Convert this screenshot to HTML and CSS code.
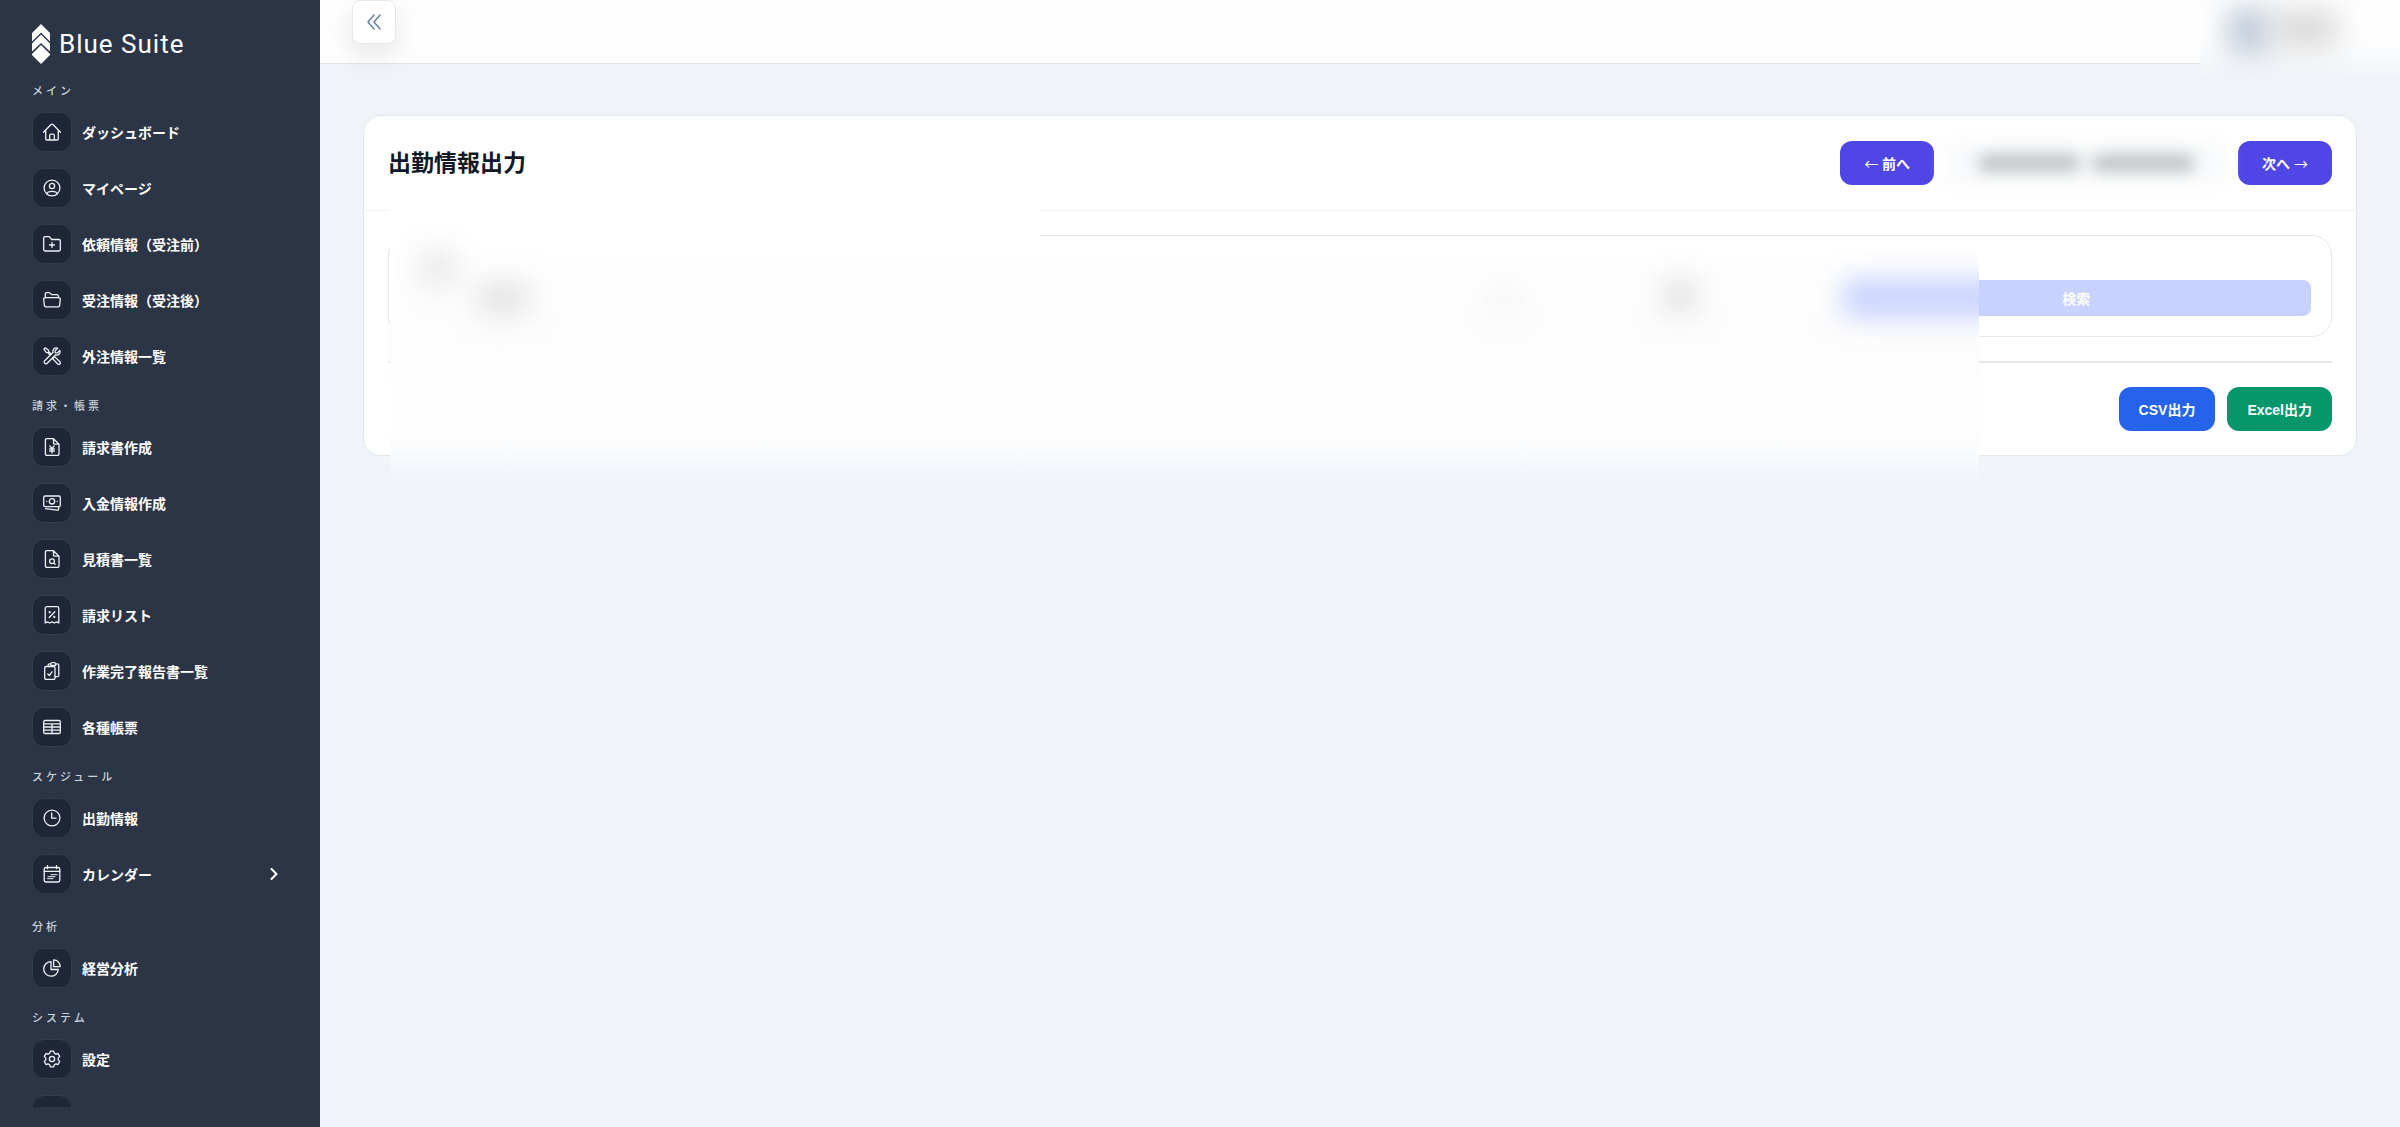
FILE: index.html
```html
<!DOCTYPE html>
<html lang="ja">
<head>
<meta charset="utf-8">
<meta name="viewport" content="width=device-width, initial-scale=1">
<title>出勤情報出力</title>
<link rel="stylesheet" href="styles.css">
</head>
<body>
<div class="app">
  <aside class="sidebar">
    <a class="logo" href="#">
      <svg class="logo-mark" viewBox="0 0 18 40" aria-hidden="true"><path d="M9 0l9 9v8.500l-9-9-9 9V9z"/><path d="M9 10.500l9 9v8l-9-8.500-9 8.500v-8z"/><path d="M9 21l9 9v1l-9 9-9-9v-1z"/></svg>
      <span>Blue Suite</span>
    </a>
    <nav class="nav">
      <h2 class="nav-heading">メイン</h2>
      <a class="nav-item" href="#"><span class="nav-icon"><svg viewBox="0 0 18 18"><path d="M.5 9.300L7.800 1.700a1.700 1.700 0 0 1 2.400 0l7.300 7.600M2.700 7.200v8.600c0 .7.500 1.200 1.200 1.200h10.200c.7 0 1.200-.5 1.200-1.200V7.200M6.700 17v-4.500c0-.8.500-1.300 1.300-1.300h2c.8 0 1.300.5 1.300 1.300V17"/></svg></span>ダッシュボード</a>
      <a class="nav-item" href="#"><span class="nav-icon"><svg viewBox="0 0 18 18"><circle cx="9" cy="9" r="7.900"/><circle cx="9" cy="7" r="2.600"/><path d="M3.700 14.800c.5-1.700 2.500-2.400 5.300-2.400s4.800.7 5.300 2.400"/></svg></span>マイページ</a>
      <a class="nav-item" href="#"><span class="nav-icon"><svg viewBox="0 0 18 18"><path d="M.7 14.600V3.100c0-.8.600-1.400 1.400-1.400h4.200l2.400 2.800h7.200c.8 0 1.400.6 1.400 1.400v8.700c0 .8-.6 1.400-1.400 1.400H2.100c-.8 0-1.400-.6-1.400-1.400zM9 7.500v5M6.500 10h5"/></svg></span>依頼情報（受注前）</a>
      <a class="nav-item" href="#"><span class="nav-icon"><svg viewBox="0 0 18 18"><path d="M2.300 6.800V2.900c0-.8.500-1.300 1.300-1.300h3l2 2h5.200c1 0 1.600.6 1.600 1.500v1.700M2.100 6.700h13.800c.9 0 1.500.6 1.400 1.500l-.7 6.300c-.1.800-.7 1.300-1.500 1.300H2.900c-.8 0-1.400-.5-1.500-1.300L.7 8.200c-.1-.9.500-1.500 1.400-1.500z"/></svg></span>受注情報（受注後）</a>
      <a class="nav-item" href="#"><span class="nav-icon"><svg viewBox="0 0 18 18"><path d="M7.200 8.300L4.900 5.600l-1.700-.3L.9 2.200 2.300.8l3.100 2.300.4 1.700 2.500 2.400M10.600 10.500l1.300-.6 5 4.900c1.300 1.500-.7 3.500-2.200 2.200l-4.700-4.900.6-1.600zM16.800 3.400l-2.500 2.500-2.100-.1-.1-2.100 2.500-2.500c-1.800-.8-3.700-.1-4.400 1.500-.4.800-.4 1.700-.1 2.500L1.700 13.800c-1.700 1.500.9 4.200 2.500 2.500l8.500-8.500c2.600 1 5.200-1.500 4.100-4.400z"/></svg></span>外注情報一覧</a>
      <h2 class="nav-heading">請求・帳票</h2>
      <a class="nav-item" href="#"><span class="nav-icon"><svg viewBox="0 0 18 18"><path d="M3.700.7h6.800L16 6.200v9.900c0 .8-.5 1.300-1.300 1.300H3.700c-.8 0-1.300-.5-1.300-1.300V2c0-.8.500-1.300 1.300-1.300zM10.500.7v4.200c0 .8.500 1.300 1.300 1.300H16M6.900 8L9 10.700 11.100 8M9 10.700v4.200M6.700 11h4.600M6.700 13h4.600"/></svg></span>請求書作成</a>
      <a class="nav-item" href="#"><span class="nav-icon"><svg viewBox="0 0 18 18"><rect x=".7" y="2" width="16.600" height="10.600" rx="1.400"/><circle cx="9" cy="7.300" r="2.700"/><path d="M3.600 7.300h.2M14.200 7.300h.2M2.500 14.700l11.600 1.500c1 .1 1.500-.3 1.500-1.200v-2"/></svg></span>入金情報作成</a>
      <a class="nav-item" href="#"><span class="nav-icon"><svg viewBox="0 0 18 18"><path d="M3.700.7h6.800L16 6.200v9.900c0 .8-.5 1.300-1.300 1.300H3.700c-.8 0-1.300-.5-1.300-1.300V2c0-.8.500-1.300 1.300-1.300zM10.500.7v4.200c0 .8.500 1.300 1.300 1.300H16M10.800 13l1.300 1.300"/><circle cx="9" cy="11.200" r="2.400"/></svg></span>見積書一覧</a>
      <a class="nav-item" href="#"><span class="nav-icon"><svg viewBox="0 0 18 18"><path d="M2.200 17V2.300C2.200 1.400 2.900.7 3.800.7h10.400c.9 0 1.600.7 1.600 1.600V17l-2.300-1.200-2.200 1.200L9 15.800 6.700 17l-2.200-1.200zM6.200 11.500l5.600-5.800"/><circle cx="6.700" cy="6.200" r=".5"/><circle cx="11.300" cy="11" r=".5"/></svg></span>請求リスト</a>
      <a class="nav-item" href="#"><span class="nav-icon"><svg viewBox="0 0 18 18"><rect x="1.700" y="4.500" width="10.300" height="13" rx="1.400"/><path d="M5.200 4.500V3.200c0-.8.500-1.300 1.300-1.300h1.200C8 .9 9 .4 10.200.4s2.200.5 2.500 1.500h1.600c.9 0 1.500.6 1.500 1.500v9.800c0 .9-.6 1.500-1.500 1.500H12M7.700 1.900v1.400h5V1.900M4.800 12l1.500 1.600 2.700-3.800"/></svg></span>作業完了報告書一覧</a>
      <a class="nav-item" href="#"><span class="nav-icon"><svg viewBox="0 0 18 18"><rect x=".7" y="2.500" width="16.600" height="13" rx="1.200"/><path d="M.7 5.800h16.600M.7 9h16.600M.7 12.200h16.600M9 5.800v9.700"/></svg></span>各種帳票</a>
      <h2 class="nav-heading">スケジュール</h2>
      <a class="nav-item" href="#"><span class="nav-icon"><svg viewBox="0 0 18 18"><circle cx="9" cy="9" r="7.900"/><path d="M8.700 4v5.200H13"/></svg></span>出勤情報</a>
      <a class="nav-item nav-item-group" href="#"><span class="nav-icon"><svg viewBox="0 0 18 18"><rect x="1.200" y="2.500" width="15.600" height="14.500" rx="1.800"/><path d="M4.500.7v3M13.500.7v3M1.200 6.300h15.600"/><path stroke-width="1" d="M8 9.700h6M5 11.700h7M4.500 13.700h5.500"/></svg></span>カレンダー<svg class="chevron" viewBox="0 0 10 12"><path d="M2.500 1l5 5-5 5"/></svg></a>
      <h2 class="nav-heading">分析</h2>
      <a class="nav-item" href="#"><span class="nav-icon"><svg viewBox="0 0 18 18"><path d="M8 2.600a7.300 7.300 0 1 0 7.300 7.900H8z"/><path d="M10.600.9v6.700h6.600A6.700 6.700 0 0 0 10.600.9z"/></svg></span>経営分析</a>
      <h2 class="nav-heading">システム</h2>
      <a class="nav-item" href="#"><span class="nav-icon"><svg viewBox="0 0 18 18"><path d="M7.300 1.100h3.400l.6 2.100 1.500.9 2.200-.6 1.700 2.900-1.500 1.700v1.800l1.500 1.700-1.700 2.900-2.200-.6-1.500.9-.6 2.100H7.300l-.6-2.100-1.500-.9-2.200.6-1.700-2.900 1.500-1.700V8.100L1.300 6.400 3 3.500l2.200.6 1.500-.9z"/><circle cx="9" cy="9" r="2.600"/></svg></span>設定</a>
      <div class="nav-item"><span class="nav-icon"></span></div>
    </nav>
  </aside>

  <div class="page">
    <header class="topbar">
      <button class="toggle" type="button" aria-label="メニュー"><svg viewBox="0 0 14 16"><path d="M7 1L1 8l6 7M13 1L7 8l6 7"/></svg></button>
      <div class="veil veil-account"><span class="blob blob-avatar"></span><span class="blob blob-name"></span></div>
    </header>

    <main class="main">
      <section class="card">
        <div class="card-head">
          <h1 class="title">出勤情報出力</h1>
          <div class="period">
            <button class="btn btn-nav" type="button"><span class="arrow">←</span> 前へ</button>
            <div class="range"><span class="range-date"></span><span class="range-date"></span></div>
            <button class="btn btn-nav" type="button">次へ <span class="arrow">→</span></button>
          </div>
        </div>
        <div class="card-body">
          <form class="filter">
            <button class="search" type="submit" disabled>検索</button>
          </form>
          <hr class="rule">
          <div class="exports">
            <button class="btn btn-csv" type="button">CSV出力</button>
            <button class="btn btn-excel" type="button">Excel出力</button>
          </div>
        </div>
        <div class="veil veil-left">
          <span class="blob blob-label"></span>
          <span class="blob blob-value"></span>
        </div>
        <div class="veil veil-right">
          <span class="blob blob-faint"></span>
          <span class="blob blob-mark"></span>
          <span class="blob blob-search"></span>
        </div>
      </section>
    </main>
  </div>
</div>
</body>
</html>
```
FILE: styles.css
```css
* { box-sizing: border-box; }

body {
  margin: 0;
  background: #f0f4f9;
  color: #111827;
  font-family: "Liberation Sans", "Noto Sans CJK JP", sans-serif;
  font-size: 14px;
}

button { font: inherit; border: 0; cursor: pointer; }
a { color: inherit; text-decoration: none; }

.app { display: flex; min-height: 100vh; }

/* Sidebar */
.sidebar {
  display: flex;
  flex-direction: column;
  flex: 0 0 320px;
  height: 100vh;
  padding: 24px 32px 20px;
  background: #2c3546;
  color: #fff;
}

.logo {
  display: flex;
  align-items: center;
  gap: 9px;
  height: 40px;
  margin-bottom: 5px;
  font-family: Roboto, sans-serif;
  font-size: 26px;
  letter-spacing: 1px;
}
.logo-mark { width: 18px; height: 40px; fill: #fff; }

.nav { flex: 1; min-height: 0; overflow: hidden; }

.nav-heading {
  height: 35px;
  margin: 0;
  padding-top: 12px;
  color: #cbd2dd;
  font-size: 11px;
  font-weight: 500;
  line-height: 20px;
  letter-spacing: 3px;
}

.nav-item {
  display: flex;
  align-items: center;
  gap: 10px;
  height: 56px;
  font-weight: 700;
}
.nav-item-group { margin-bottom: 3px; }

.nav-icon {
  display: grid;
  place-items: center;
  width: 40px;
  height: 40px;
  border: 1px solid #343d4e;
  border-radius: 12px;
  background: #1f2637;
}
.nav-icon svg, .chevron, .toggle svg {
  fill: none;
  stroke: currentColor;
  stroke-linecap: round;
  stroke-linejoin: round;
}
.nav-icon svg { width: 18px; height: 18px; stroke: #eef1f6; stroke-width: 1.3; }
.chevron { width: 10px; height: 12px; margin: 0 9px 0 auto; stroke-width: 2; }

/* Top bar */
.page { flex: 1; min-width: 0; }

.topbar {
  position: relative;
  height: 64px;
  padding: 0 32px;
  border-bottom: 1px solid #e2e6eb;
  background: #fefefe;
}

.toggle {
  display: grid;
  place-items: center;
  width: 44px;
  height: 44px;
  border: 1px solid #e2e8f0;
  border-radius: 8px;
  background: #fff;
  color: #64809c;
  box-shadow: 0 12px 28px rgba(15, 23, 42, .1);
}
.toggle svg { width: 14px; height: 16px; stroke-width: 1.5; }

/* Card */
.main { padding: 51px 43px 40px; }

.card {
  position: relative;
  border: 1px solid #e3e7ec;
  border-radius: 18px;
  background: #fff;
}

.card-head {
  display: flex;
  justify-content: space-between;
  align-items: center;
  padding: 25px 24px;
  border-bottom: 1px solid #eff1f4;
}
.title { margin: 0; font-size: 23px; line-height: 32px; }

.period { display: flex; align-items: center; gap: 12px; }

.btn {
  height: 44px;
  padding: 0 20px;
  border-radius: 12px;
  color: #fff;
  font-weight: 700;
  white-space: nowrap;
}
.btn-nav { padding: 0 24px; background: #4f46e5; }
.btn-csv { background: #2563eb; }
.btn-excel { background: #059669; }
.arrow { font-family: "Noto Sans CJK JP", sans-serif; font-weight: 400; }

.range {
  display: flex;
  justify-content: center;
  align-items: center;
  gap: 14px;
  width: 280px;
  height: 44px;
  background: #f9fafb;
  filter: blur(8px);
}
.range-date { width: 100px; height: 16px; background: #b8bcc1; }

.card-body { padding: 24px; }

.filter {
  display: grid;
  grid-template-columns: repeat(4, 1fr);
  gap: 8px;
  padding: 44px 20px 20px;
  border: 1px solid #e5e7eb;
  border-radius: 20px;
}

.search {
  grid-column: 4;
  height: 36px;
  border-radius: 8px;
  background: #c7d2fe;
  color: #fff;
  font-weight: 700;
}

.rule { height: 2px; margin: 24px 0; border: 0; background: #e5e7eb; }
.exports { display: flex; justify-content: flex-end; gap: 12px; }

/* Frosted covers over private values */
.veil { position: absolute; overflow: hidden; }

.veil-left, .veil-right {
  bottom: -30px;
  background: linear-gradient(to top, #f0f4f9 0, #f2f5fa 12px, #f9fbfd 34px, #fefefe 52px, #fefefe 90px, #fdfdfd 140px, #fdfdfd 170px, #fefefe 210px, #fff 240px);
}
.veil-left { top: 90px; left: 26px; width: 650px; }
.veil-right { top: 136px; left: 676px; right: 377px; }

.veil-account {
  top: 0;
  right: 0;
  width: 200px;
  height: 78px;
  background: linear-gradient(#fefefe 40px, #f0f4f9);
}

.blob { position: absolute; filter: blur(14px); }
.blob-label { top: 44px; left: 30px; width: 36px; height: 36px; background: #e8e8e8; }
.blob-value { top: 76px; left: 88px; width: 50px; height: 32px; background: #e2e2e2; }
.blob-faint { top: 32px; left: 452px; width: 24px; height: 30px; background: #f4f4f4; }
.blob-mark { top: 26px; left: 622px; width: 36px; height: 36px; background: #e2e5e3; }
.blob-search { top: 28px; right: -60px; width: 196px; height: 36px; background: #c4cffe; }
.blob-avatar { top: 8px; left: 26px; width: 46px; height: 46px; background: #c2ccda; }
.blob-name { top: 10px; left: 72px; width: 66px; height: 38px; background: #dadada; }
```
